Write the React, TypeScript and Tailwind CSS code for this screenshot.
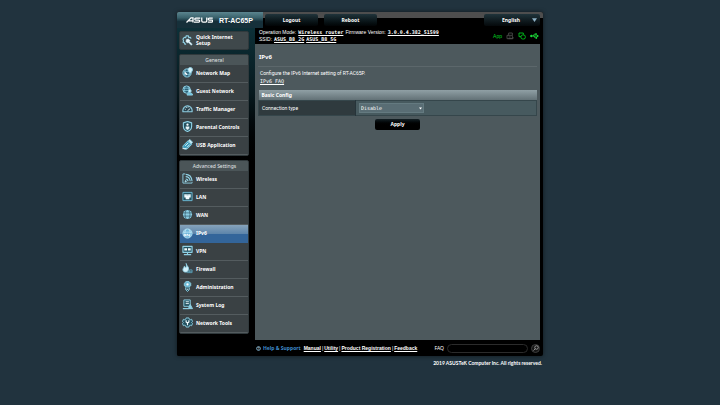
import React, { useState } from "react";

type IconName =
  | "setup" | "map" | "guest" | "traffic" | "parental" | "usb"
  | "wireless" | "lan" | "wan" | "ipv6" | "vpn" | "firewall"
  | "admin" | "log" | "tools";

const globe = (
  <>
    <circle cx="12" cy="12" r="10" fill="#8acce2" stroke="none" />
    <path
      d="M2 8.5h20M2 15.5h20M9 2c-3 6-3 14 0 20M15 2c3 6 3 14 0 20"
      stroke="#35596a"
      strokeWidth="1.5"
    />
  </>
);

const drawings: Record<IconName, React.ReactNode> = {
  setup: (
    <>
      <path d="M9 20H6l-.5-3-3-1 .8-4L2 9l3-4 3 1L9 2h5l1 4 3-1 2 3" strokeWidth="2.5" />
      <path d="M9 9l5-1 4 4-1 2 6 6-3 3-6-6-3 1-3-4z" fill="#e8f6fa" stroke="#4a8298" strokeWidth="1" />
    </>
  ),
  map: (
    <>
      <circle cx="11" cy="13" r="9" fill="#2c6278" />
      <path d="M3 10h16M3 16h16M8 5c-3 5-3 11 0 16M14 5c3 5 3 11 0 16" strokeWidth="1.5" />
      <path d="M18 1c3 0 5 2 5 5s-5 8-5 8-5-5-5-8 2-5 5-5z" fill="#d4f1f9" />
      <path d="M6 12l5 5" stroke="#fff" strokeWidth="3" />
    </>
  ),
  guest: (
    <>
      <circle cx="10" cy="10" r="8" fill="#2c6278" />
      <path d="M2 7h16M2 12h14M7 3c-2 4-2 10 0 14M13 3c2 4 2 6 2 8" strokeWidth="1.5" />
      <circle cx="17" cy="13" r="3" fill="#e2f6fb" />
      <path d="M11 22c0-7 12-7 12 0z" fill="#6cc4e2" />
    </>
  ),
  traffic: (
    <>
      <path d="M2 19C0 2 24 2 22 19z" fill="#28434e" strokeWidth="2.5" />
      <path d="M6 13l2 1M9 9l1 2M14 8l-1 2M12 17l6-5" stroke="#e8f6fa" />
    </>
  ),
  parental: (
    <>
      <path d="M12 1l9 3v8c0 5-4 9-9 11-5-2-9-6-9-11V4z" fill="#24515f" strokeWidth="2.5" />
      <circle cx="12" cy="8" r="2.5" fill="#fff" stroke="none" />
      <path d="M8 17v-5h8v5h-2v2h-4v-2z" fill="#e8f6fa" stroke="none" />
    </>
  ),
  usb: (
    <>
      <path d="M3 14L13 4l8 8-9 9c-6 4-13-2-9-7z" fill="#3f9dbd" />
      <path d="M14 4l3-3 6 6-3 4z" fill="#d4f1f9" />
      <path d="M7 15l7-7M11 18l6-6M1 21h9" stroke="#e8f6fa" />
    </>
  ),
  wireless: (
    <>
      <path d="M7 2H2v20h20v-2" />
      <path d="M8 3c8 0 13 6 14 15M8 8c5 0 9 4 10 10M8 13c3 0 5 2 5 5" strokeWidth="2.5" />
      <circle cx="8" cy="18" r="1.5" fill="#fff" />
    </>
  ),
  lan: (
    <>
      <path d="M2 3h20v18H2z" fill="#24515f" stroke="#6fbcd6" />
      <path d="M5 7h14v7h-3v4H8v-4H5z" fill="#f2fbfe" stroke="none" />
      <path d="M9 7v3M12 7v3M15 7v3" stroke="#4a8298" strokeWidth="1" />
    </>
  ),
  wan: globe,
  ipv6: (
    <>
      <circle cx="12" cy="12" r="10" fill="#6fb6dc" stroke="#b5e2f4" />
      <path d="M3 9h18M9 3c-2 3-3 6-3 9M15 3c2 3 3 6 3 9" strokeWidth="1.5" stroke="#d4f1f9" />
      <path d="M5 18v-4h3v4M11 18v-5l6 5v-5" stroke="#fff" />
    </>
  ),
  vpn: (
    <>
      <path d="M2 3h20v13H2z" fill="#24515f" strokeWidth="2.5" />
      <path d="M12 16v5M4 21h16" strokeWidth="2.5" />
      <path d="M5 7h6v5H5zM13 7h6v5h-6z" fill="#f2fbfe" stroke="none" />
    </>
  ),
  firewall: (
    <>
      <path d="M9 1c1 6 7 7 5 14-1 6-11 7-12 0 0-4 3-5 3-8 2 1 3 3 3 4 2-3 2-6 1-10z" fill="#d4f1f9" />
      <path d="M10 21h12v-6h-6M16 15v6M12 18h10" stroke="#5a9cb4" />
    </>
  ),
  admin: (
    <>
      <path d="M9 1h6l4 4v5l-4 4H9l-4-4V5z" fill="#6cb8d2" />
      <circle cx="12" cy="7.5" r="2.5" fill="#fff" stroke="none" />
      <path d="M8 14v5l4 4 4-4v-5" fill="#24515f" />
      <path d="M10 18h4" stroke="#e8f6fa" />
    </>
  ),
  log: (
    <>
      <path d="M4 2h14v14H4z" fill="#24515f" />
      <path d="M8 6h7M8 10h7" stroke="#e8f6fa" />
      <path d="M2 21h13v-4l3-5 5 9H2z" fill="#8fd0e4" />
    </>
  ),
  tools: (
    <>
      <path
        d="M9 2h6l1 3 2 1 3-1 2 5-2 2 2 2-2 5-3-1-2 1-1 3H9l-1-3-2-1-3 1-2-5 2-2-2-2 2-5 3 1 2-1z"
        fill="#24515f"
      />
      <path d="M9 7v4l3 2 3-2V7M12 13v5" stroke="#f2fbfe" strokeWidth="2.5" />
    </>
  ),
};

function NavIcon({ name }: { name: IconName }) {
  return (
    <svg
      viewBox="0 0 24 24"
      className="size-[11px] shrink-0"
      fill="none"
      stroke="#8fd0e4"
      strokeWidth="2"
      strokeLinejoin="round"
      aria-hidden="true"
    >
      {drawings[name]}
    </svg>
  );
}

type Item = { label: string; icon: IconName; active?: boolean };

const general: Item[] = [
  { label: "Network Map", icon: "map" },
  { label: "Guest Network", icon: "guest" },
  { label: "Traffic Manager", icon: "traffic" },
  { label: "Parental Controls", icon: "parental" },
  { label: "USB Application", icon: "usb" },
];

const advanced: Item[] = [
  { label: "Wireless", icon: "wireless" },
  { label: "LAN", icon: "lan" },
  { label: "WAN", icon: "wan" },
  { label: "IPv6", icon: "ipv6", active: true },
  { label: "VPN", icon: "vpn" },
  { label: "Firewall", icon: "firewall" },
  { label: "Administration", icon: "admin" },
  { label: "System Log", icon: "log" },
  { label: "Network Tools", icon: "tools" },
];

function Menu({ title, items }: { title: string; items: Item[] }) {
  return (
    <nav aria-label={title} className="overflow-hidden rounded-[2px] border border-[#30393c] bg-[#3a4144]">
      <h2 className="flex h-[10px] items-center justify-center bg-[#4b5558] pl-px text-[5px] font-normal text-[#e2e7e9]">
        {title}
      </h2>
      <ul>
        {items.map((item) => (
          <li key={item.label}>
            <a
              href="#"
              aria-current={item.active ? "page" : undefined}
              className={
                item.active
                  ? "flex h-[18px] items-center gap-[3px] bg-linear-to-b from-[#86a3bb] from-0% via-[#5c84aa] via-50% to-[#33659a] to-50% px-[2px] pb-[2px] font-bold"
                  : "flex h-[18px] items-center gap-[3px] border-b border-[#545c5f] px-[2px] pb-[2px] font-bold"
              }
            >
              <NavIcon name={item.icon} />
              <span>{item.label}</span>
            </a>
          </li>
        ))}
      </ul>
    </nav>
  );
}

function Tab({ children }: { children: React.ReactNode }) {
  return (
    <button
      type="button"
      className="h-3 w-[53px] rounded-[2px] bg-linear-to-b from-[#20343b] to-[#020506] text-[5px] font-bold"
    >
      {children}
    </button>
  );
}

function Header() {
  return (
    <header className="flex h-4 items-center bg-linear-to-b from-[#4e4e4e] from-40% to-black to-40% pr-[3px]">
      <div className="flex h-full w-[86px] items-center gap-[6px] bg-linear-to-b from-[#5b858f] via-[#3a626c] via-35% to-[#16303a] to-60% pl-[9px]">
        <svg viewBox="0 0 108 24" className="h-[6px] w-[27px]" role="img" aria-label="ASUS" fill="none" stroke="#fff" strokeWidth="5">
          <path d="M2 22L20 3h8v19M10 15h17M57 4H39q-4 0-4 4t4 4h12q4 0 4 4t-4 4H32M63 2v13q0 5 5 5h10q5 0 5-5V2M107 4H93q-4 0-4 4t4 4h10q4 0 4 4t-4 4H87" />
        </svg>
        <span className="text-[7px] leading-none font-bold whitespace-nowrap font-['Liberation_Sans',Arial,sans-serif]">RT-AC65P</span>
      </div>
      <div className="flex gap-[6px] pl-[2px]">
        <Tab>Logout</Tab>
        <Tab>Reboot</Tab>
      </div>
      <div className="relative ml-auto">
        <select
          aria-label="Language"
          className="block h-3 w-[56px] appearance-none rounded-[2px] bg-linear-to-b from-[#20343b] to-[#05090b] pr-[4px] pl-[18px] text-[5px] font-bold"
        >
          <option>English</option>
        </select>
        <svg viewBox="0 0 8 6" className="pointer-events-none absolute top-1 right-[3px] h-[4px] w-[5px]" aria-hidden="true">
          <path d="M0 0h8L4 6z" fill="#8db0c4" />
        </svg>
      </div>
    </header>
  );
}

const monoLink = "font-['DejaVu_Sans_Mono','Liberation_Mono',monospace] font-bold underline";

function Status() {
  return (
    <div className="flex h-4 items-start justify-between pt-px pl-1 text-[5px] leading-[7px] font-['Liberation_Sans',Arial,sans-serif]">
      <div className="whitespace-nowrap">
        <p className="flex gap-[2px]">
          Operation Mode: <a href="#" className={monoLink}>Wireless router</a> Firmware Version:{" "}
          <a href="#" className={monoLink}>3.0.0.4.382_51599</a>
        </p>
        <p className="flex gap-[2px]">
          SSID: <a href="#" className={monoLink}>ASUS_B8_2G</a> <a href="#" className={monoLink}>ASUS_B8_5G</a>
        </p>
      </div>
      <div className="flex items-center gap-1 pt-[3px] pr-px text-[#00d420]">
        <a href="#">App</a>
        <svg viewBox="0 0 24 24" className="size-2" fill="none" stroke="#505050" strokeWidth="2.5" aria-hidden="true">
          <path d="M3 10h16v10H3zM8 10V3h11v7M7 20h14v-5M8 15h6" />
        </svg>
        <svg viewBox="0 0 24 24" className="size-2" fill="none" stroke="#00d420" strokeWidth="2.5" aria-hidden="true">
          <path d="M9 14H3V3h13v5" />
          <rect x="9" y="9" width="13" height="12" rx="5" />
        </svg>
        <svg viewBox="0 0 28 24" className="h-2 w-[9px]" fill="none" stroke="#20f040" strokeWidth="2.5" aria-hidden="true">
          <path d="M4 12h20M9 12l5-6h5M12 12l4 6h5" />
          <circle cx="4" cy="12" r="2.5" fill="#20f040" />
          <path d="M23 10l3 2-3 2zM18 5h2v2h-2zM19 17h2v2h-2z" fill="#20f040" />
        </svg>
      </div>
    </div>
  );
}

function Content() {
  const [mode, setMode] = useState("Disable");
  return (
    <main className="h-[296px] bg-[#4d595d] px-[3px] pt-[9px] text-[5px] leading-[8px] font-['Liberation_Sans',Arial,sans-serif]">
      <h1 className="border-b border-[#5c676b] px-px pb-[5px] text-[6px] font-bold font-['Noto_Sans',sans-serif]">IPv6</h1>
      <div className="px-[2px] pt-[2px] font-['Roboto',Arial,sans-serif]">
        <p>Configure the IPv6 Internet setting of RT-AC65P.</p>
        <a href="#" className="block w-fit underline font-['DejaVu_Sans_Mono','Liberation_Mono',monospace]">IPv6 FAQ</a>
      </div>
      <table className="mt-[5px] w-full border-collapse">
        <thead>
          <tr>
            <th colSpan={2} className="h-[10px] bg-linear-to-b from-[#90a0a5] to-[#637277] p-0 pl-[3px] text-left font-bold font-['Noto_Sans',sans-serif]">
              Basic Config
            </th>
          </tr>
        </thead>
        <tbody>
          <tr className="border border-[#35464b]">
            <th scope="row" className="h-[15px] w-[97px] border-r border-[#26343a] bg-[#2f3a3e] p-0 pl-[3px] text-left font-normal font-['Roboto',Arial,sans-serif]">
              <label htmlFor="connection">Connection type</label>
            </th>
            <td className="bg-[#475a5f] p-0 pl-[3px]">
              <div className="relative w-[65px]">
                <select
                  id="connection"
                  value={mode}
                  onChange={(e) => setMode(e.target.value)}
                  className="block h-[10px] w-full appearance-none border border-[#647a80] bg-[#596d74] pl-px text-[5px] leading-[8px] font-['DejaVu_Sans_Mono','Liberation_Mono',monospace]"
                >
                  <option>Disable</option>
                  <option>Native</option>
                </select>
                <svg viewBox="0 0 6 4" className="pointer-events-none absolute top-1 right-[2px] h-[3px] w-[3px]" aria-hidden="true">
                  <path d="M0 0h6L3 4z" fill="#fff" />
                </svg>
              </div>
            </td>
          </tr>
        </tbody>
      </table>
      <button
        type="button"
        className="mx-auto mt-[3px] block h-[11px] w-[45px] rounded-[2px] bg-linear-to-b from-[#152126] to-black to-60% text-[5px] leading-none font-bold font-['Noto_Sans',sans-serif]"
      >
        Apply
      </button>
    </main>
  );
}

function Footer() {
  const links = ["Manual", "Utility", "Product Registration", "Feedback"];
  return (
    <footer className="flex h-4 items-center pl-px text-[5px] whitespace-nowrap">
      <svg viewBox="0 0 12 12" className="size-[5px]" aria-hidden="true">
        <circle cx="6" cy="6" r="4.5" fill="none" stroke="#8fc8e8" strokeWidth="2" />
        <path d="M4.5 5q0-1.500 1.500-1.500T7.500 5 6 7v1.500" fill="none" stroke="#fff" />
      </svg>
      <a href="#" className="pl-[2px] font-bold text-[#3f8ccc]">Help &amp; Support</a>
      <div className="flex gap-px pl-[3px] font-['Liberation_Sans',Arial,sans-serif]">
        {links.map((link, i) => (
          <React.Fragment key={link}>
            {i > 0 && <span>|</span>}
            <a href="#" className="font-bold underline">{link}</a>
          </React.Fragment>
        ))}
      </div>
      <form className="ml-auto flex items-center gap-[3px]" onSubmit={(e) => e.preventDefault()}>
        <label htmlFor="faq">FAQ</label>
        <input id="faq" className="h-[9px] w-[81px] rounded-full border border-[#2b2b2b] bg-black px-1 text-[5px]" />
        <button type="submit" aria-label="Search" className="flex size-[9px] items-center justify-center rounded-full border border-[#3c3c3c] bg-[#151515]">
          <svg viewBox="0 0 12 12" className="size-[6px]" fill="none" stroke="#b8b8b8" strokeWidth="1.5" aria-hidden="true">
            <circle cx="7" cy="5" r="3.5" />
            <path d="M4.5 7.5L1 11" />
          </svg>
        </button>
      </form>
    </footer>
  );
}

export default function App() {
  return (
    <div className="min-h-screen bg-[#21333e] pt-3 text-[5px] leading-[6px] text-white font-['Noto_Sans',sans-serif]">
      <div className="mx-auto w-full max-w-[366px]">
        <div className="overflow-hidden rounded-[2px] bg-black shadow-[0_0_4px_#0008]">
          <Header />
          <div className="flex">
            <aside className="flex w-[78px] shrink-0 flex-col gap-1 bg-linear-to-b from-[#0d3038] via-[#07191e] via-20% to-black to-45% pt-[3px] pr-[6px] pl-[2px]">
              <a href="#" className="flex h-[19px] items-center gap-[3px] rounded-[2px] border border-[#30393c] bg-[#3f484b] px-[2px] pb-px font-bold">
                <NavIcon name="setup" />
                <span>Quick Internet<br />Setup</span>
              </a>
              <Menu title="General" items={general} />
              <Menu title="Advanced Settings" items={advanced} />
            </aside>
            <div className="min-w-0 flex-1 pr-[3px]">
              <Status />
              <Content />
              <Footer />
            </div>
          </div>
        </div>
        <p className="pt-1 pr-px text-right font-bold font-['Lato',sans-serif]">2019 ASUSTeK Computer Inc. All rights reserved.</p>
      </div>
    </div>
  );
}
